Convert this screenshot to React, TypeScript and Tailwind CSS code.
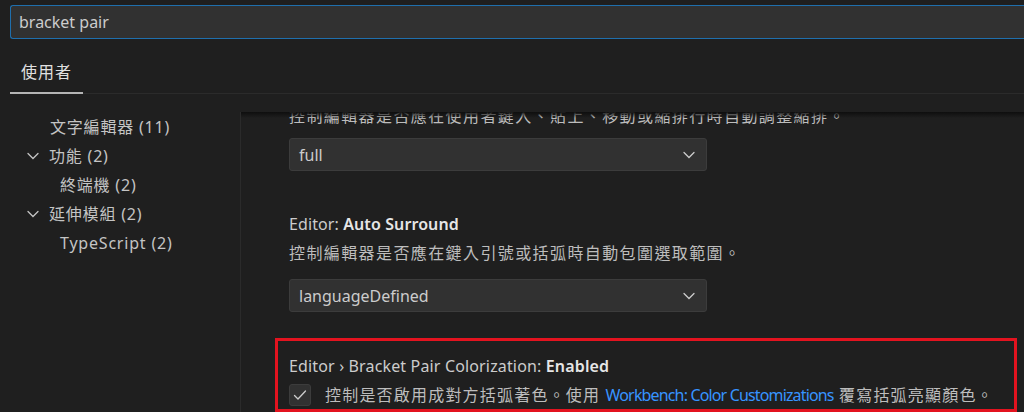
import React from 'react'

const font = { fontFamily: '"Segoe UI", "Noto Sans", "Noto Sans CJK TC", sans-serif' }

function Chevron({ className }: { className?: string }) {
  return (
    <svg className={className} width="16" height="16" viewBox="0 0 16 16" fill="none">
      <path d="M3 5.5l5 5 5-5" stroke="currentColor" strokeWidth="1.3" strokeLinecap="round" />
    </svg>
  )
}

function Dropdown({ value }: { value: string }) {
  return (
    <div className="flex h-[33px] w-[418px] items-center justify-between rounded-[3px] border border-[#3c3c3c] bg-[#313131] pl-[9px] pr-[9px] text-[16px] text-[#cccccc]">
      <span>{value}</span>
      <Chevron className="text-[#cccccc]" />
    </div>
  )
}

function TreeItem({ label, indent, open }: { label: string; indent: number; open?: boolean }) {
  return (
    <div className="flex h-[29px] items-center text-[16px] tracking-[0.8px] text-[#c4c4c4]" style={{ paddingLeft: indent }}>
      {open && <Chevron className="mr-[8px] -ml-[25px] text-[#c4c4c4]" />}
      <span>{label}</span>
    </div>
  )
}

function App() {
  return (
    <div className="h-[412px] w-[1024px] overflow-hidden bg-[#1f1f1f]" style={font}>
      <div className="pl-[10px] pt-[5px]">
        <div className="flex h-[34px] items-center rounded-l-[3px] border border-r-0 border-[#1f6fad] bg-[#313131] pl-[8px] text-[16px] text-[#cccccc]">
          bracket pair
        </div>
      </div>
      <div className="flex items-end pl-[10px]">
        <div className="border-b-2 border-[#b5b5b5] px-[11px] pb-[8px] pt-[21px] text-[16px] leading-[24px] tracking-[1px] text-[#e0e0e0]">
          使用者
        </div>
        <div className="flex-1 border-b border-[#2b2b2b]" />
      </div>
      <div className="mt-[18px] flex h-[300px]">
        <div className="w-[240px] shrink-0">
          <TreeItem label="文字編輯器 (11)" indent={50} />
          <TreeItem label="功能 (2)" indent={50} open />
          <TreeItem label="終端機 (2)" indent={60} />
          <TreeItem label="延伸模組 (2)" indent={50} open />
          <TreeItem label="TypeScript (2)" indent={60} />
        </div>
        <div className="relative flex-1 overflow-hidden border-l border-[#2b2b2b]">
          <div className="pointer-events-none absolute inset-x-0 top-0 h-[6px] bg-gradient-to-b from-[#0e0e0e] to-transparent" />
          <div className="-mt-[8px] pl-[48px] text-[16px] leading-[24px] text-[#bdbdbd]">
            <div className="whitespace-nowrap tracking-[1.4px]">控制編輯器是否應在使用者鍵入、貼上、移動或縮排行時自動調整縮排。</div>
            <div className="mt-[10px]">
              <Dropdown value="full" />
            </div>
            <div className="mt-[41px] tracking-[0.1px] text-[#cccccc]">
              Editor: <span className="font-semibold text-[#e6e6e6]">Auto Surround</span>
            </div>
            <div className="mt-[5px] tracking-[1.4px]">控制編輯器是否應在鍵入引號或括弧時自動包圍選取範圍。</div>
            <div className="mt-[14px]">
              <Dropdown value="languageDefined" />
            </div>
            <div className="-ml-[14px] mt-[26px] h-[74px] w-[742px] border-[3px] border-[#e3131f] pl-[11px] pt-[13px]">
              <div className="tracking-[0.15px] text-[#cccccc]">
                Editor › Bracket Pair Colorization: <span className="font-semibold text-[#e6e6e6]">Enabled</span>
              </div>
              <div className="mt-[5px] flex items-center">
                <div className="flex h-[22px] w-[22px] shrink-0 items-center justify-center rounded-[3px] border border-[#3c3c3c] bg-[#313131]">
                  <svg width="16" height="16" viewBox="0 0 16 16" fill="none">
                    <path d="M2.5 8.5l3.5 3.5 7.5-8" stroke="#cccccc" strokeWidth="1.3" strokeLinecap="round" />
                  </svg>
                </div>
                <span className="ml-[14px] whitespace-nowrap tracking-[1.2px]">
                  控制是否啟用成對方括弧著色。使用{' '}
                  <span className="tracking-[-0.85px] text-[#3794ff]">Workbench: Color Customizations</span>{' '}
                  覆寫括弧亮顯顏色。
                </span>
              </div>
            </div>
          </div>
        </div>
      </div>
    </div>
  )
}

export default App
